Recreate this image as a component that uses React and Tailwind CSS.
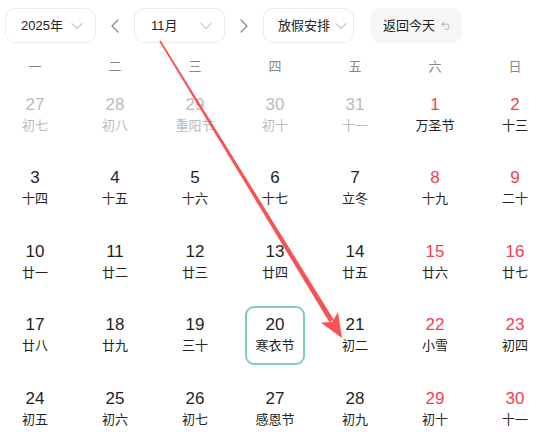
import React from 'react';
import { ChevronDown, ChevronLeft, ChevronRight, Undo2 } from 'lucide-react';

const weekdays = ['一', '二', '三', '四', '五', '六', '日'];

// g = 非本月, r = 周末红字, s = 选中
const rows = [
    [['27', '初七', 'g'], ['28', '初八', 'g'], ['29', '重阳节', 'g'], ['30', '初十', 'g'], ['31', '十一', 'g'], ['1', '万圣节', 'r'], ['2', '十三', 'r']],
    [['3', '十四'], ['4', '十五'], ['5', '十六'], ['6', '十七'], ['7', '立冬'], ['8', '十九', 'r'], ['9', '二十', 'r']],
    [['10', '廿一'], ['11', '廿二'], ['12', '廿三'], ['13', '廿四'], ['14', '廿五'], ['15', '廿六', 'r'], ['16', '廿七', 'r']],
    [['17', '廿八'], ['18', '廿九'], ['19', '三十'], ['20', '寒衣节', 's'], ['21', '初二'], ['22', '小雪', 'r'], ['23', '初四', 'r']],
    [['24', '初五'], ['25', '初六'], ['26', '初七'], ['27', '感恩节'], ['28', '初九'], ['29', '初十', 'r'], ['30', '十一', 'r']],
];

const font = { fontFamily: '"Liberation Sans", "Noto Sans CJK SC", sans-serif' };

function Select({ label, className = '' }) {
    return (
        <div className={`flex h-[35px] w-[91px] items-center justify-between rounded-[10px] border border-[#ececec] bg-white text-[13px] text-[#222] ${className}`}>
            <span>{label}</span>
            <ChevronDown size={20} strokeWidth={1.1} className="text-[#999]" />
        </div>
    );
}

function Day({ num, lunar, kind }) {
    const numColor = kind === 'g' ? 'text-[#bbbbbb]' : kind === 'r' ? 'text-[#f3404f]' : 'text-[#1f1f1f]';
    const lunarColor = kind === 'g' ? 'text-[#bbbbbb]' : 'text-[#222]';
    return (
        <div className="flex justify-center">
            <div className={`flex h-[59px] w-[60px] flex-col items-center justify-center rounded-[9px] ${kind === 's' ? 'border-2 border-[#7fd0ad]' : ''}`}>
                <div className={`text-[17px] leading-[20px] ${numColor}`}>{num}</div>
                <div className={`mt-[2px] text-[13px] leading-[18px] ${lunarColor}`}>{lunar}</div>
            </div>
        </div>
    );
}

export default function App() {
    return (
        <div className="relative h-[441px] w-[554px] overflow-hidden bg-white" style={font}>
            <div className="flex items-center pl-[5px] pt-[8px]">
                <Select label="2025年" className="pl-[15px] pr-[8px]" />
                <div className="flex w-[38px] justify-center text-[#888]">
                    <ChevronLeft size={24} strokeWidth={1.2} />
                </div>
                <Select label="11月" className="pl-[16px] pr-[8px]" />
                <div className="flex w-[38px] justify-center text-[#888]">
                    <ChevronRight size={24} strokeWidth={1.2} />
                </div>
                <Select label="放假安排" className="pl-[14px] pr-[2px]" />
                <div className="ml-[17px] flex h-[35px] w-[91px] items-center gap-[5px] rounded-[10px] bg-[#f6f6f6] pl-[12px] text-[13px] text-[#222]">
                    <span>返回今天</span>
                    <Undo2 size={11} strokeWidth={1.6} className="text-[#999]" />
                </div>
            </div>

            <div className="-ml-[5px] w-[560px]">
                <div className="mt-[14px] grid grid-cols-7">
                    {weekdays.map((w) => (
                        <div key={w} className="text-center text-[13px] leading-[20px] text-[#888]">{w}</div>
                    ))}
                </div>
                <div className="mt-[8px] grid grid-cols-7 gap-y-[14.5px]">
                    {rows.flat().map(([num, lunar, kind], i) => (
                        <Day key={i} num={num} lunar={lunar} kind={kind} />
                    ))}
                </div>
            </div>

            {/* 红色标注箭头 */}
            <svg className="pointer-events-none absolute left-0 top-0" width="554" height="441">
                <polygon points="160.7,40.6 159.3,41.4 329.4,322.3 333.7,319.6" fill="#f65354" />
                <polygon points="342,338 338,312.3 332.1,321.8 320.9,322.8" fill="#f65354" />
            </svg>
        </div>
    );
}
